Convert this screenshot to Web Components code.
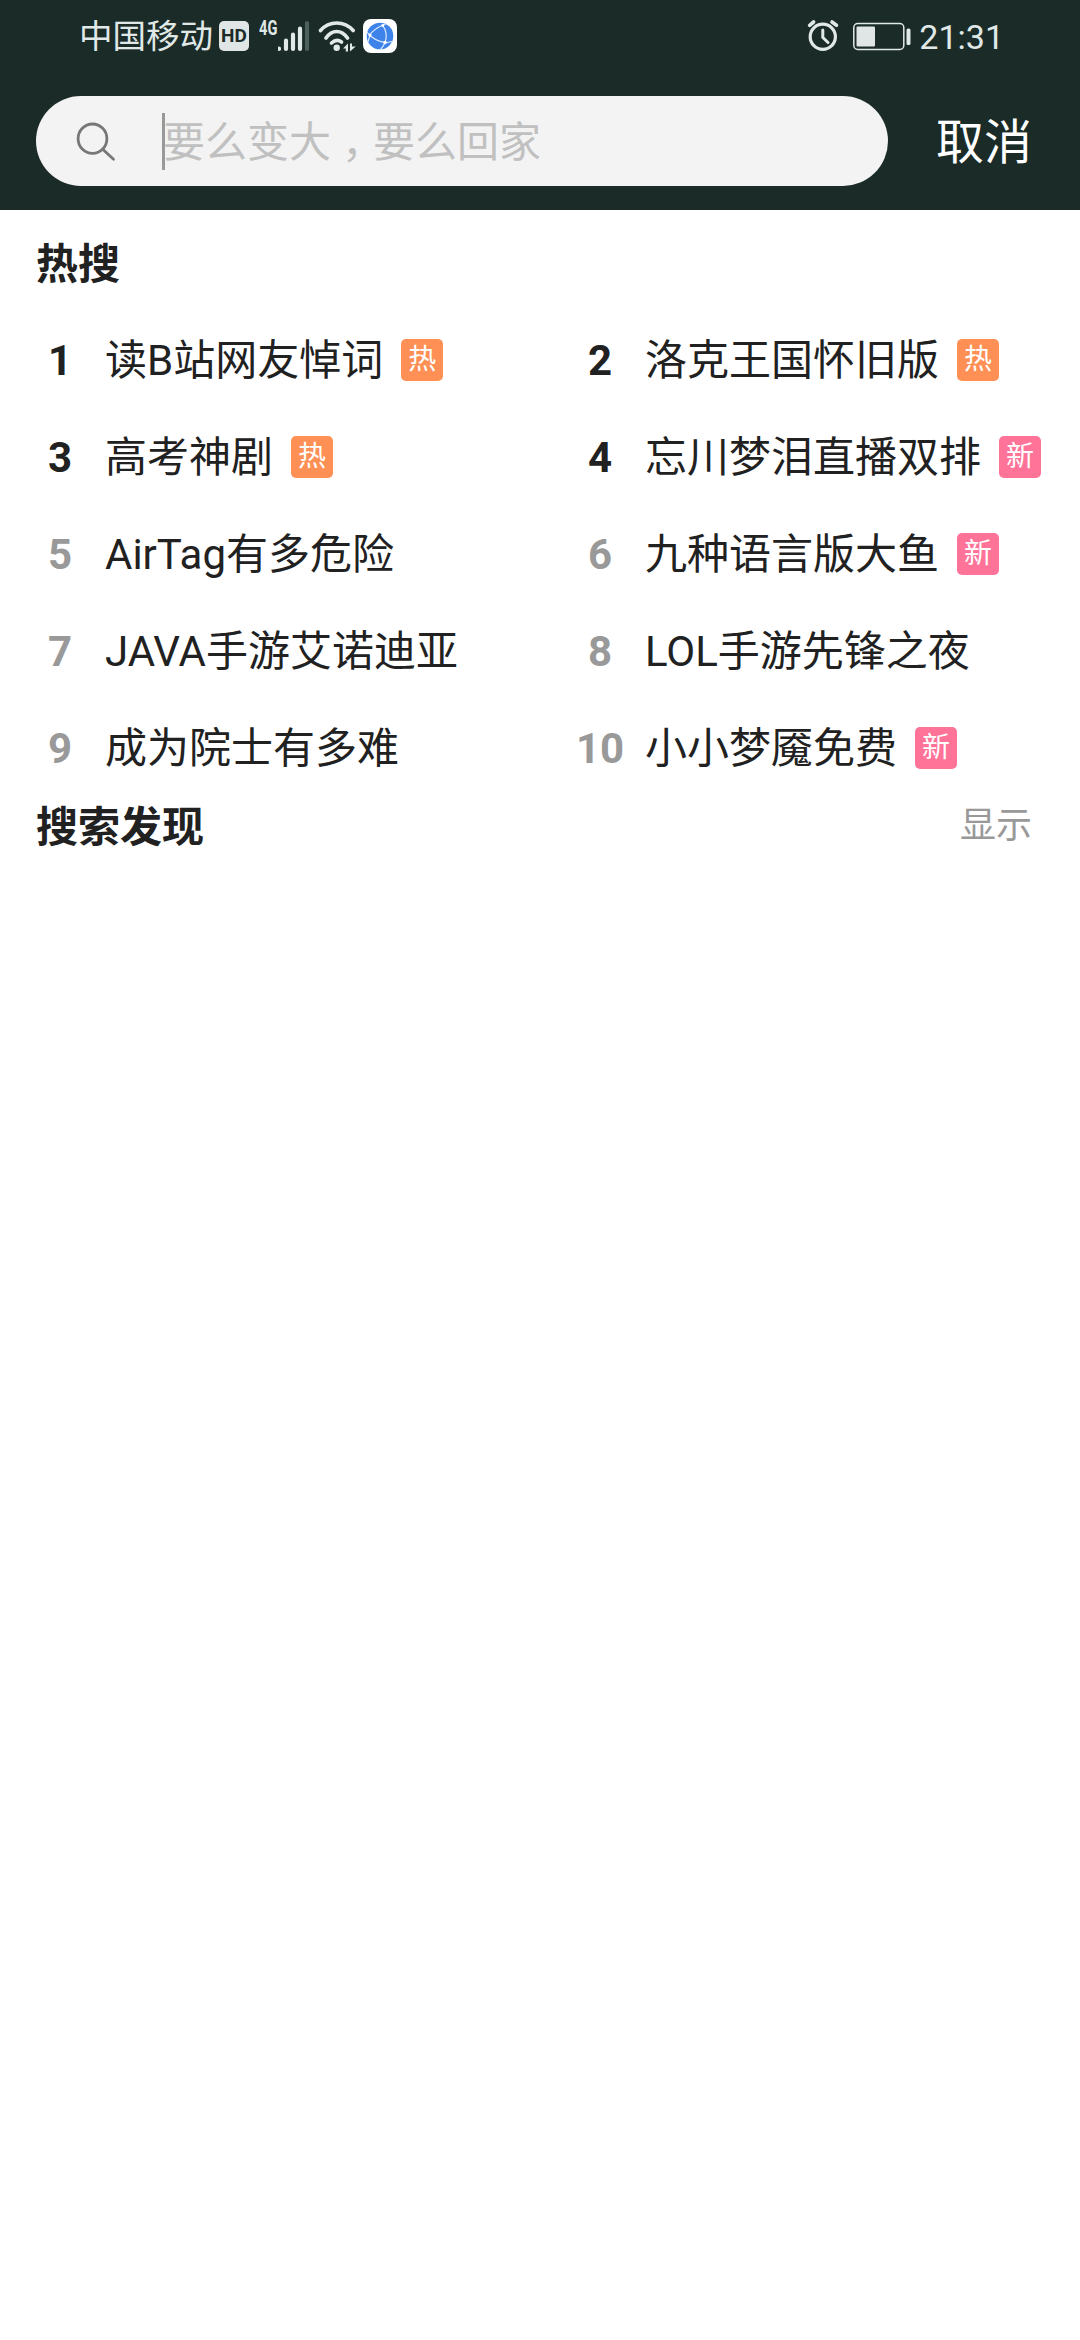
<!DOCTYPE html>
<html lang="zh-CN">
<head>
<meta charset="utf-8">
<title>搜索</title>
<style>
html, body { margin: 0; background: #fff; }
body { font-family: Roboto, "Noto Sans CJK SC", sans-serif; color: #212121; }
</style>
</head>
<body>
<search-page></search-page>
<script>
const define = (name, html, setup) => customElements.define(name, class extends HTMLElement {
  constructor() {
    super();
    const t = document.createElement('template');
    t.innerHTML = html;
    this.attachShadow({ mode: 'open' }).append(t.content.cloneNode(true));
  }
  connectedCallback() { if (setup) setup(this, this.shadowRoot); }
});

define('status-bar', `
<style>
:host { display: flex; justify-content: space-between; height: 72px; padding: 0 76px 0 79px; box-sizing: border-box; color: #e0e9e7; font-size: 34px; line-height: 74px; white-space: nowrap; }
div { display: flex; }
svg { display: block; height: 72px; }
.carrier { width: 140px; font-size: 33.5px; line-height: 74px; }
.hd { width: 30px; height: 30px; margin-top: 21px; border-radius: 5px; background: #e0e6e5; color: #1a2b28; font: bold 19px/30px Roboto, sans-serif; display: flex; justify-content: center; }
.net { width: 19px; margin-left: 10px; height: 20px; margin-top: 18px; font: bold 20px/20px Roboto, sans-serif; transform: scaleX(.73); transform-origin: 0 0; }
</style>
<div>
  <span class="carrier">中国移动</span>
  <span class="hd">HD</span>
  <span class="net">4G</span>
  <svg width="124" viewBox="278 0 124 72" fill="none" stroke="#e0e9e7" stroke-linecap="round">
    <path stroke-width="4.2" d="M279 48.7v.2M286 40.7v8.2M293 34.7v14.2M300 28.7v20.2"/>
    <path stroke-width="4.2" stroke="#4e605c" d="M307 23v26"/>
    <path stroke-width="3.7" d="M320.5 30.5Q327 23 336.7 23T353.2 30.5M326 38Q330.5 31.5 336.7 31.5T347.5 38"/>
    <path stroke-width="3.7" d="M331.5 43Q336.7 38.300 341.5 42"/>
    <circle cx="336.7" cy="47.8" r="3.2" fill="#e0e9e7" stroke="none"/>
    <path fill="#e0e9e7" stroke="none" d="M343 48.5L348 43.5V51.500H345.8V48.500zM350 43.500H352V46.500H355.700L350 51.500z"/>
    <rect x="363" y="19" width="34" height="34" rx="8" fill="#fff" stroke="none"/>
    <circle cx="380" cy="36" r="13.300" fill="#3d83ea" stroke="none"/>
    <path stroke="#dce9ff" stroke-width="1.2" d="M369.500 35Q374 29 382.500 25.200M370 35.500Q377 41.500 385 42.500M382.500 25.200Q388.500 33 385 42.500Q383.500 46 381 49M385 42.500Q389 42.500 391.500 41.500M369.500 35L367.500 32.500M370 35.500L368 41.500M382.500 25.200L386 23.800"/>
    <g fill="#fff" stroke="none"><circle cx="370" cy="35" r="1.600"/><circle cx="382.800" cy="25.500" r="1.400"/><circle cx="385" cy="42.500" r="1.800"/></g>
  </svg>
</div>
<div>
  <svg width="114" viewBox="804 0 114 72" fill="none" stroke="#e0e9e7" stroke-linecap="round" stroke-linejoin="round">
    <circle cx="821.8" cy="36.8" r="12.6" stroke-width="3.200"/>
    <path stroke-width="3" d="M821.8 30V37.5L827 42.5"/>
    <path stroke-width="3.6" d="M808.6 25.300L812.600 22M831 22L835.500 25.300"/>
    <rect x="852.8" y="23.5" width="50" height="26" rx="4" stroke-width="1.5"/>
    <rect x="855.5" y="26.5" width="18.5" height="20" rx="1" fill="#e0e6e5" stroke="none"/>
    <rect x="905.5" y="28.5" width="4" height="16.5" rx="1.5" fill="#e0e9e7" stroke="none"/>
  </svg>
  <span>21:31</span>
</div>`);

define('search-field', `
<style>
:host { display: flex; align-items: center; width: 852px; height: 90px; border-radius: 45px; background: #f3f3f3; }
svg { display: block; width: 42px; height: 42px; margin-left: 39px; }
.caret { width: 3px; height: 57px; margin-left: 45px; background: #999; }
.hint { color: #c0c0c0; font-size: 42px; line-height: 90px; margin: 3px 0 0 -2px; white-space: nowrap; }
.comma { font-family: "Noto Sans CJK TC", sans-serif; line-height: 0; vertical-align: -13px; }
</style>
<svg viewBox="75 120 42 42" fill="none" stroke="#777" stroke-width="2.8" stroke-linecap="round">
  <ellipse cx="92.5" cy="138.7" rx="14.4" ry="14.7"/><path d="M103 149.5L113.5 159.3"/>
</svg>
<span class="caret"></span>
<span class="hint">要么变大<span class="comma" lang="zh-TW">，</span>要么回家</span>`);

define('search-header', `
<style>
:host { display: block; height: 210px; background: #1a2b28; }
.row { display: flex; align-items: flex-start; padding: 24px 48px 0 36px; justify-content: space-between; }
.cancel { color: #fff; font-size: 48px; line-height: 94px; }
</style>
<status-bar></status-bar>
<div class="row"><search-field></search-field><span class="cancel">取消</span></div>`);

define('hot-tag', `
<style>
:host { display: flex; justify-content: center; width: 42px; height: 42px; margin: 0 0 2px 18px; border-radius: 5px; background: #ff9055; color: #fff; font-size: 28px; line-height: 42px; }
:host([kind="新"]) { background: #ff7399; }
</style><span><slot></slot></span>`);

define('hot-item', `
<style>
:host { display: flex; align-items: center; height: 97px; padding-left: 36px; font-size: 42px; line-height: 97px; white-space: nowrap; box-sizing: border-box; }
.rank { width: 48px; margin-right: 21px; text-align: center; font-weight: bold; }
:host([quiet]) .rank { color: #999; }
</style>
<span class="rank"></span><span><slot></slot></span><slot name="tag"></slot>`,
(el, root) => { root.querySelector('.rank').textContent = el.getAttribute('rank'); });

define('section-title', `
<style>
:host { display: flex; justify-content: space-between; align-items: center; padding: 0 48px 0 36px; font-size: 42px; line-height: 62px; }
b { font-weight: bold; }
::slotted(*) { color: #999; font-size: 36px; line-height: 58px; align-self: flex-start; }
</style>
<b><slot></slot></b><slot name="action"></slot>`);

define('hot-list', `
<style>:host { display: grid; grid-template-columns: 540px 540px; }</style>`,
(el, root) => {
  [['读B站网友悼词', '热'], ['洛克王国怀旧版', '热'], ['高考神剧', '热'], ['忘川梦泪直播双排', '新'],
   ['AirTag有多危险'], ['九种语言版大鱼', '新'], ['JAVA手游艾诺迪亚'], ['LOL手游先锋之夜'],
   ['成为院士有多难'], ['小小梦魇免费', '新']].forEach(([text, tag], i) => {
    const item = document.createElement('hot-item');
    item.setAttribute('rank', i + 1);
    if (i > 3) item.setAttribute('quiet', '');
    item.append(text);
    if (tag) {
      const t = document.createElement('hot-tag');
      t.slot = 'tag';
      t.setAttribute('kind', tag);
      t.textContent = tag;
      item.append(t);
    }
    root.append(item);
  });
});

define('search-page', `
<style>
:host { display: block; width: 1080px; height: 2340px; background: #fff; overflow: hidden; }
.hot { padding-top: 24px; }
hot-list { margin-top: 16px; }
</style>
<search-header></search-header>
<section-title class="hot">热搜</section-title>
<hot-list></hot-list>
<section-title>搜索发现<span slot="action">显示</span></section-title>`);
</script>
</body>
</html>
